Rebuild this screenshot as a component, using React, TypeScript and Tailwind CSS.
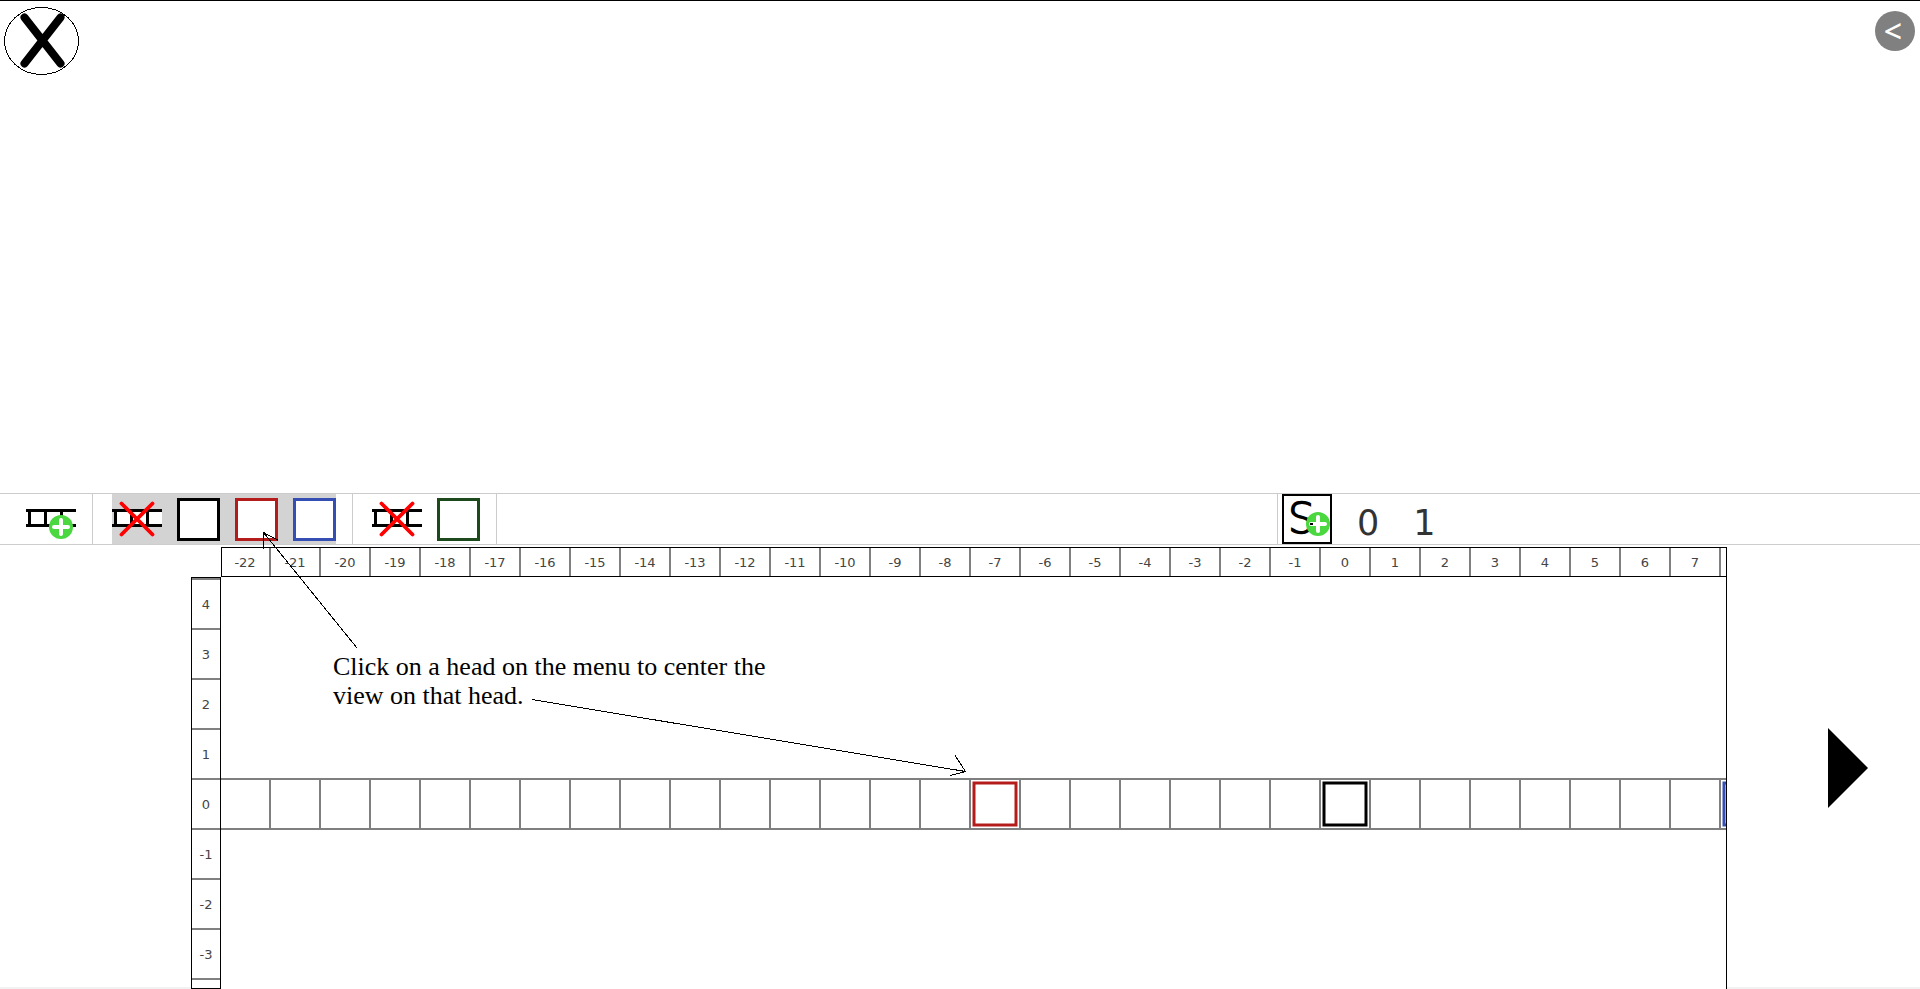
import React from "react";

const columns = Array.from({ length: 30 }, (_, i) => i - 22);
const rows = [4, 3, 2, 1, 0, -1, -2, -3];

function PlusBadge({ cx, cy }: { cx: number; cy: number }) {
  return (
    <g>
      <circle cx={cx} cy={cy} r="12" fill="#4bd740" />
      <path
        d={`M${cx - 7} ${cy}H${cx + 7}M${cx} ${cy - 7}V${cy + 7}`}
        stroke="#fff"
        strokeWidth="4"
        strokeLinecap="round"
      />
    </g>
  );
}

function TapeIcon({ kind }: { kind: "add" | "remove" }) {
  return (
    <svg width="50" height="50" viewBox="0 0 50 50" aria-hidden="true">
      <path d="M3 16.5H50V31.5H3Z" fill="#fff" />
      <path d="M0 16.5H50M0 31.5H50" stroke="#000" strokeWidth="3" />
      <path d="M3.5 16V32M19.5 16V32M35.5 16V32" stroke="#000" strokeWidth="3" />
      {kind === "add" ? (
        <PlusBadge cx={35} cy={33} />
      ) : (
        <path d="M9.5 9.5L40.5 40.5M40.5 9.5L9.5 40.5" stroke="#f00" strokeWidth="3.8" strokeLinecap="round" />
      )}
    </svg>
  );
}

function HeadButton({ label, color }: { label: string; color: string }) {
  return <button type="button" aria-label={label} className={`size-[43px] border-3 bg-white ${color}`} />;
}

function TapeHead({ color }: { color: string }) {
  return (
    <svg width="50" height="50" viewBox="0 0 50 50" className="shrink-0" aria-hidden="true">
      <rect x="3" y="4" width="42" height="42" fill="none" stroke={color} strokeWidth="3" />
    </svg>
  );
}

const heads: Record<number, string> = { [-7]: "#b41c1c", 0: "#000000", 8: "#344eb4" };

function Toolbar() {
  return (
    <nav className="flex h-[52px] shrink-0 items-stretch border-y border-[#cccccc]">
      <div className="flex border-r border-[#cccccc] pr-4 pl-[26px]">
        <button type="button" aria-label="Add tape">
          <TapeIcon kind="add" />
        </button>
      </div>
      <div className="flex border-r border-[#cccccc] pr-4 pl-[19px]">
        <div className="flex items-center gap-[15px] bg-[#d3d3d3]">
          <button type="button" aria-label="Remove first tape">
            <TapeIcon kind="remove" />
          </button>
          <HeadButton label="Black head" color="border-black" />
          <HeadButton label="Red head" color="border-[#b41c1c]" />
          <HeadButton label="Blue head" color="border-[#344eb4]" />
        </div>
      </div>
      <div className="flex items-center gap-[15px] border-r border-[#cccccc] pr-4 pl-[19px]">
        <button type="button" aria-label="Remove second tape">
          <TapeIcon kind="remove" />
        </button>
        <HeadButton label="Green head" color="border-[#1c4a1c]" />
      </div>
      <div className="ml-auto flex w-[643px] border-l border-[#cccccc] pl-1">
        <button type="button" aria-label="Add symbol" className="size-[50px] border-2 border-black">
          <svg width="46" height="46" viewBox="2 2 46 46" className="overflow-visible" aria-hidden="true">
            <text
              x="6"
              y="39"
              fontSize="42"
              fontWeight="200"
              stroke="#000"
              strokeWidth="1.6"
              className="font-['DejaVu_Sans']"
            >
              S
            </text>
            <PlusBadge cx={36} cy={30} />
            <path d="M28 30H31" stroke="#000" strokeWidth="2" />
          </svg>
        </button>
        <div className="flex items-center gap-[34px] pt-2 pl-[25px] text-[35px] leading-[42px] text-[#333333]">
          <button type="button">0</button>
          <button type="button">1</button>
        </div>
      </div>
    </nav>
  );
}

function ColumnRuler() {
  return (
    <div className="flex h-[30px] shrink-0 overflow-hidden border border-black text-[13px] leading-[30px] text-[#444444]">
      {columns.map((n) => (
        <span
          key={n}
          className="w-[50px] shrink-0 border-r-2 border-[#808080] text-center first:w-[49px] first:pr-px"
        >
          {n}
        </span>
      ))}
    </div>
  );
}

function RowRuler() {
  return (
    <div className="mt-[30px] flex flex-col overflow-hidden border border-black text-[13px] leading-[50px] text-[#444444]">
      <div className="h-[2px] shrink-0 bg-[#808080]" />
      {rows.map((n) => (
        <span key={n} className="h-[50px] shrink-0 border-b-2 border-[#808080] text-center">
          {n}
        </span>
      ))}
    </div>
  );
}

function Tape() {
  return (
    <div className="mt-[201px] flex h-[52px] overflow-hidden border-y-2 border-black/50">
      {[...columns, 8].map((n) => (
        <div key={n} className="-my-[2px] flex w-[50px] shrink-0 items-center border-r-2 border-black/50">
          {heads[n] && <TapeHead color={heads[n]} />}
        </div>
      ))}
    </div>
  );
}

function Annotation() {
  return (
    <div className="pointer-events-none absolute top-0 left-0">
      <svg
        width="1000"
        height="260"
        viewBox="0 0 1000 260"
        className="absolute top-0 left-0 overflow-visible"
        fill="none"
        stroke="#000"
        shapeRendering="crispEdges"
        aria-hidden="true"
      >
        <path d="M357 103L263.5 -12.5M263.5 3.5V-12.5L278.5 -4.5" />
        <path d="M532 154.5L965.5 226.5M955 210.5L965.5 226.5L950 230.5" />
      </svg>
      <p className="absolute top-[107px] left-[333px] w-[480px] font-['Liberation_Serif',serif] text-[26px] leading-[29px] text-black">
        Click on a head on the menu to center the
        <br />
        view on that head.
      </p>
    </div>
  );
}

export default function App() {
  return (
    <div className="flex h-screen min-h-[700px] flex-col overflow-hidden bg-white font-['DejaVu_Sans',sans-serif]">
      <header className="flex grow-492 basis-0 items-start justify-between border-t border-black pr-[5px] pl-1">
        <button type="button" aria-label="Close" className="mt-[6px]">
          <svg width="75" height="68" viewBox="0 0 75 68" aria-hidden="true">
            <ellipse cx="37.5" cy="34" rx="37" ry="33.5" fill="none" stroke="#000" shapeRendering="crispEdges" />
            <path d="M20.5 10.5L56.5 56.5M56.5 10.5L20.5 56.5" stroke="#000" strokeWidth="8" strokeLinecap="round" />
          </svg>
        </button>
        <button
          type="button"
          className="mt-[10px] size-10 rounded-full bg-[#808080] pr-1 font-['Noto_Sans',sans-serif] text-[32px] leading-10 font-medium text-white"
        >
          &lt;
        </button>
      </header>
      <Toolbar />
      <main className="relative grid grow-442 basis-0 grid-cols-[191px_30px_1fr_193px] pt-[2px]">
        <div className="border-b-2 border-[#f2f2f2]" />
        <RowRuler />
        <section className="flex min-w-0 flex-col">
          <ColumnRuler />
          <div className="min-w-0 grow overflow-hidden border-r border-black">
            <Tape />
          </div>
        </section>
        <div className="flex items-center justify-end border-b-2 border-[#f2f2f2] pt-[2px] pr-[52px]">
          <button type="button" aria-label="Next">
            <svg width="40" height="80" viewBox="0 0 40 80" aria-hidden="true">
              <path d="M0 0L40 40L0 80Z" />
            </svg>
          </button>
        </div>
        <Annotation />
      </main>
    </div>
  );
}
